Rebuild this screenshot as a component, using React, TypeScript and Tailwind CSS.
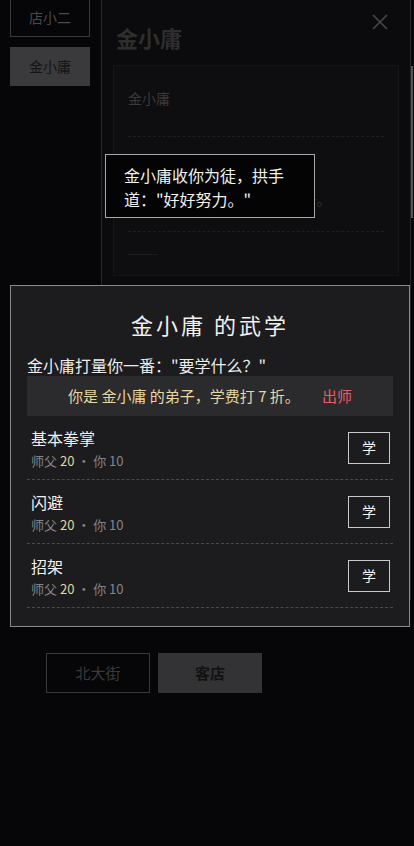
import React from "react";

const font = { fontFamily: '"Noto Sans CJK SC", "Noto Sans", sans-serif' };

const skills = [
  { name: "基本拳掌", master: 20, me: 10 },
  { name: "闪避", master: 20, me: 10 },
  { name: "招架", master: 20, me: 10 },
];

export default function App() {
  return (
    <div className="relative w-[414px] h-[846px] overflow-hidden bg-[#060508]" style={font}>
      {/* base page */}
      <div className="flex flex-col h-full">
        <div className="flex flex-col gap-[10px] pl-[10px] mt-[-3px] w-[90px]">
          <div className="h-[40px] w-[80px] border border-[#3a3a3a] flex items-center justify-center text-[14px] text-[#4a4a4a]">
            店小二
          </div>
          <div className="h-[39px] w-[80px] bg-[#3a393b] flex items-center justify-center text-[14px] text-[#141414]">
            金小庸
          </div>
        </div>
        <div className="flex-1" />
        <div className="flex gap-[8px] pl-[46px] pb-[153px]">
          <div className="h-[40px] w-[104px] border border-[#383838] flex items-center justify-center text-[15px] text-[#3a3a3a]">
            北大街
          </div>
          <div className="h-[40px] w-[104px] bg-[#333234] flex items-center justify-center text-[15px] font-bold text-[#121212]">
            客店
          </div>
        </div>
      </div>

      {/* scrollbar thumb */}
      <div className="absolute right-[1px] top-[66px] w-[3px] h-[152px] bg-[#555]" />

      {/* dimmed side panel */}
      <div className="absolute left-[101px] top-0 w-[310px] h-[600px] bg-[#0b0a0c] border-l border-r border-[#262626] flex flex-col">
        <div className="flex items-start justify-between pl-[14px] pr-[22px] h-[62px]">
          <div className="mt-[21px] text-[22px] font-bold text-[#2e2e2e] leading-[32px]">金小庸</div>
          <svg width="16" height="16" viewBox="0 0 16 16" className="mt-[14px]">
            <path d="M1 1 L15 15 M15 1 L1 15" stroke="#484848" strokeWidth="1.6" />
          </svg>
        </div>
        <div className="mx-[11px] mt-[3px] border border-[#151416] bg-[#0e0d0f] px-[14px] pt-[21px] pb-[20px] flex flex-col">
          <div className="text-[14px] text-[#3a3a3a] leading-[22px]">金小庸</div>
          <div className="mt-[27px] border-t border-dashed border-[#1f1f1f]" />
          <div className="mt-[26px] text-[14.5px] text-[#333] leading-[24px]">
            金小庸收你为徒，拱手道：
            <br />
            你已成为金小庸的第一个弟子。
          </div>
          <div className="mt-[20px] border-t border-dashed border-[#1f1f1f]" />
          <div className="mt-[22px] w-[30px] border-t border-[#1c1c1c]" />
        </div>
      </div>

      {/* toast */}
      <div className="absolute left-[105px] top-[154px] w-[210px] h-[64px] border border-[#a8a8a8] bg-[#040404] pl-[18px] pr-[14px] pt-[8px] text-[16px] leading-[24px] text-[#f2f2f2]">
        金小庸收你为徒，拱手道："好好努力。"
      </div>

      {/* modal */}
      <div className="absolute left-[10px] top-[285px] w-[400px] h-[342px] bg-[#1c1b1d] border border-[#8a8a8a] px-[16px] pt-[22px] flex flex-col">
        <div className="text-center text-[22px] leading-[32px] tracking-[3px] text-[#f0f0f0]">
          金小庸 的武学
        </div>
        <div className="mt-[13px] text-[16px] leading-[24px] text-[#ededed]">
          金小庸打量你一番："要学什么？"
        </div>
        <div className="mt-[-1px] h-[40px] bg-[#2b2a2c] flex items-center justify-center gap-[22px] text-[15px]">
          <span className="text-[#e6d8a2]">你是 金小庸 的弟子，学费打 7 折。</span>
          <span className="text-[#f05a68]">出师</span>
        </div>
        <div className="flex flex-col">
          {skills.map((s) => (
            <div
              key={s.name}
              className="h-[64px] border-b border-dashed border-[#4a4a4c] flex items-center justify-between pl-[4px] pr-[3px]"
            >
              <div className="flex flex-col pt-[2px]">
                <div className="text-[16px] leading-[22px] text-[#f0f0f0]">{s.name}</div>
                <div className="mt-[2px] text-[13px] leading-[20px] text-[#858585]">
                  师父 <span className="text-[#e2d6a2]">{s.master}</span> · 你 {s.me}
                </div>
              </div>
              <div className="w-[42px] h-[32px] border border-[#c8c8c8] flex items-center justify-center text-[14px] text-[#f2f2f2]">
                学
              </div>
            </div>
          ))}
        </div>
      </div>
    </div>
  );
}
